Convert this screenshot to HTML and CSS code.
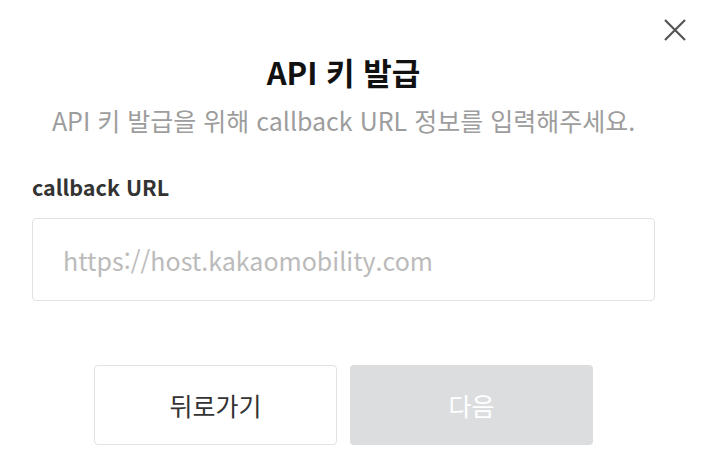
FILE: index.html
```html
<!DOCTYPE html>
<html lang="ko">
<head>
    <meta charset="UTF-8">
    <meta name="viewport" content="width=device-width, initial-scale=1.0">
    <title>API 키 발급</title>
    <link rel="stylesheet" href="styles.css">
</head>
<body>
    <div class="modal">
        <button class="close" aria-label="닫기">
            <svg width="24" height="24" viewBox="0 0 24 24">
                <path d="M2 2 L22 22 M22 2 L2 22" stroke="#555" stroke-width="2.2" fill="none"/>
            </svg>
        </button>
        <h1 class="title">API 키 발급</h1>
        <p class="desc">API 키 발급을 위해 callback URL 정보를 입력해주세요.</p>
        <label class="label" for="callback">callback URL</label>
        <input id="callback" class="field" type="text" placeholder="https://host.kakaomobility.com">
        <div class="actions">
            <button class="btn btn-back">뒤로가기</button>
            <button class="btn btn-next" disabled>다음</button>
        </div>
    </div>
</body>
</html>
```

FILE: styles.css
```css
body {
    margin: 0;
    font-family: "Noto Sans CJK KR", "Noto Sans", sans-serif;
    background: #fff;
}
.modal {
    position: relative;
    width: 703px;
    height: 470px;
    box-sizing: border-box;
    padding: 52px 48px 0 32px;
    display: flex;
    flex-direction: column;
}
.close {
    position: absolute;
    top: 18px;
    right: 16px;
    border: none;
    background: none;
    padding: 0;
    cursor: pointer;
}
.title {
    margin: 0;
    text-align: center;
    font-size: 31px;
    line-height: 40px;
    font-weight: 700;
    color: #111;
}
.desc {
    margin: 11px 0 0;
    text-align: center;
    font-size: 25px;
    line-height: 34px;
    color: #9d9d9d;
}
.label {
    margin-top: 36px;
    font-size: 21.5px;
    line-height: 28px;
    font-weight: 700;
    color: #333;
}
.field {
    margin-top: 17px;
    height: 83px;
    box-sizing: border-box;
    border: 1px solid #e2e2e2;
    border-radius: 4px;
    padding: 0 30px;
    font-family: inherit;
    font-size: 25px;
    color: #333;
    outline: none;
}
.field::placeholder {
    color: #bbb;
}
.actions {
    margin-top: 64px;
    display: flex;
    justify-content: center;
    gap: 13px;
}
.btn {
    width: 243px;
    height: 80px;
    border-radius: 4px;
    font-family: inherit;
    font-size: 25px;
}
.btn-back {
    background: #fff;
    border: 1px solid #e2e2e2;
    color: #333;
}
.btn-next {
    background: #dcdddf;
    border: none;
    color: #fff;
}
```
